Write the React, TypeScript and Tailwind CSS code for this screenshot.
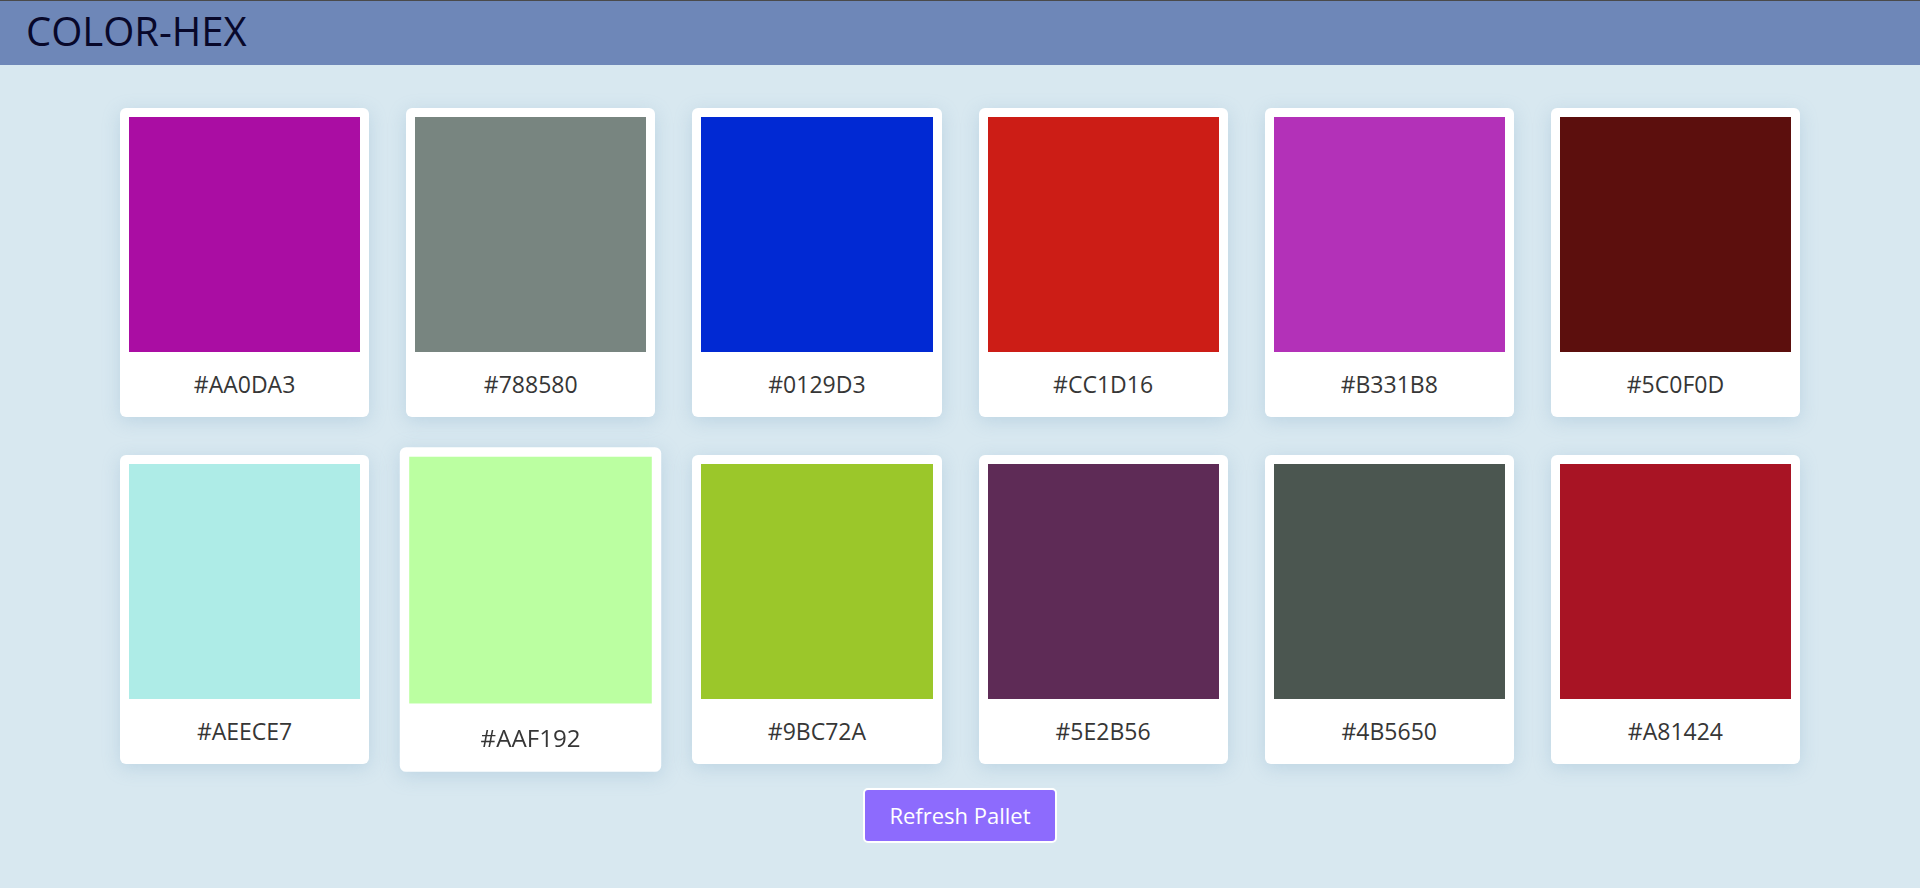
import React, { useState } from 'react';

const colors = [
  '#AA0DA3',
  '#788580',
  '#0129D3',
  '#CC1D16',
  '#B331B8',
  '#5C0F0D',
  '#AEECE7',
  '#AAF192',
  '#9BC72A',
  '#5E2B56',
  '#4B5650',
  '#A81424',
];

export default function App() {
  const [hovered, setHovered] = useState<number | null>(7);

  return (
    <div className="min-h-screen bg-[#d8e8f0] font-['Open_Sans',sans-serif]">
      {/* Header */}
      <header className="h-[65px] border-t border-[#4a4a4a] bg-[#6e87b8] pl-[26px] flex items-center">
        <h1 className="text-[40px] font-medium leading-none text-[#08082a] -mt-[4px]">COLOR-HEX</h1>
      </header>

      {/* Palette */}
      <div className="mx-auto mt-[43px] w-[1680px] grid grid-cols-6 gap-x-[37px] gap-y-[38px]">
        {colors.map((c, i) => (
          <div
            key={i}
            onMouseEnter={() => setHovered(i)}
            onMouseLeave={() => setHovered(null)}
            className={`h-[309px] rounded-[6px] bg-white p-[9px] pb-0 flex flex-col shadow-[0_4px_18px_rgba(120,160,195,0.28)] transition-transform duration-200 ${
              hovered === i ? 'scale-105' : ''
            }`}
          >
            <div
              className={`h-[235px] w-full ${hovered === i ? 'brightness-110' : ''}`}
              style={{ backgroundColor: c }}
            />
            <div className="flex-1 flex items-center justify-center text-[23px] text-[#363636]">
              {c}
            </div>
          </div>
        ))}
      </div>

      <div className="mt-[24px] flex justify-center">
        <button className="h-[55px] w-[194px] rounded-[5px] border-2 border-white bg-[#8d6bfd] text-[22px] text-white">
          Refresh Pallet
        </button>
      </div>
    </div>
  );
}
